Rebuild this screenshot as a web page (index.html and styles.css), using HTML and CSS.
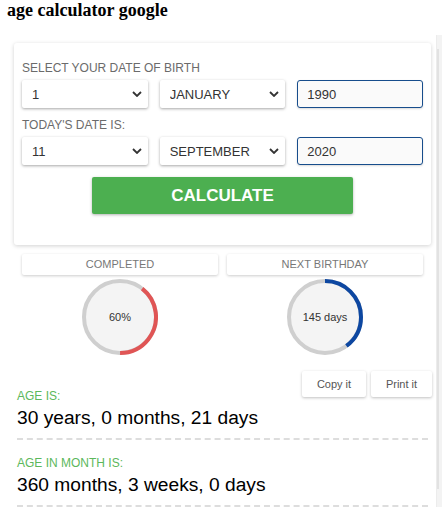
FILE: index.html
```html
<!DOCTYPE html>
<html lang="en">
    <head>
        <meta charset="UTF-8">
        <meta name="viewport" content="width=device-width, initial-scale=1.0">
        <title>age calculator google</title>
        <link rel="stylesheet" href="styles.css">
    </head>
    <body>
        <h1 class="title">age calculator google</h1>
        <div class="page">
            <div class="main">
                <div class="card">
                    <div class="label">Select your date of birth</div>
                    <div class="date-row">
                        <div class="select-wrap">
                            <select class="pick"><option>1</option></select>
                            <svg class="chev" width="10" height="6" viewBox="0 0 10 6"><path d="M1 1l4 4 4-4" fill="none" stroke="#333" stroke-width="1.8"/></svg>
                        </div>
                        <div class="select-wrap">
                            <select class="pick"><option>JANUARY</option></select>
                            <svg class="chev" width="10" height="6" viewBox="0 0 10 6"><path d="M1 1l4 4 4-4" fill="none" stroke="#333" stroke-width="1.8"/></svg>
                        </div>
                        <input class="year" type="text" value="1990">
                    </div>
                    <div class="label second">Today's date is:</div>
                    <div class="date-row">
                        <div class="select-wrap">
                            <select class="pick"><option>11</option></select>
                            <svg class="chev" width="10" height="6" viewBox="0 0 10 6"><path d="M1 1l4 4 4-4" fill="none" stroke="#333" stroke-width="1.8"/></svg>
                        </div>
                        <div class="select-wrap">
                            <select class="pick"><option>SEPTEMBER</option></select>
                            <svg class="chev" width="10" height="6" viewBox="0 0 10 6"><path d="M1 1l4 4 4-4" fill="none" stroke="#333" stroke-width="1.8"/></svg>
                        </div>
                        <input class="year" type="text" value="2020">
                    </div>
                    <button class="calc">CALCULATE</button>
                </div>

                <div class="stats">
                    <div class="tab">Completed</div>
                    <div class="tab">Next birthday</div>
                    <div class="ring">
                        <svg width="76" height="76" viewBox="0 0 76 76">
                            <circle cx="38" cy="38" r="36" fill="#f4f4f4" stroke="#cfcfcf" stroke-width="4"/>
                            <circle cx="38" cy="38" r="36" fill="none" stroke="#e05555" stroke-width="4" stroke-dasharray="89 300" transform="rotate(-52 38 38)"/>
                        </svg>
                        <span class="ring-text">60%</span>
                    </div>
                    <div class="ring">
                        <svg width="76" height="76" viewBox="0 0 76 76">
                            <circle cx="38" cy="38" r="36" fill="#f4f4f4" stroke="#cfcfcf" stroke-width="4"/>
                            <circle cx="38" cy="38" r="36" fill="none" stroke="#0d47a1" stroke-width="4" stroke-dasharray="90 300" transform="rotate(-90 38 38)"/>
                        </svg>
                        <span class="ring-text">145 days</span>
                    </div>
                </div>

                <div class="results">
                    <div class="actions">
                        <button class="small copy">Copy it</button>
                        <button class="small print">Print it</button>
                    </div>
                    <div class="result first">
                        <div class="res-label">Age is:</div>
                        <div class="res-value">30 years, 0 months, 21 days</div>
                    </div>
                    <div class="result">
                        <div class="res-label">Age in month is:</div>
                        <div class="res-value">360 months, 3 weeks, 0 days</div>
                    </div>
                </div>
            </div>
            <div class="rail"><div class="thumb"></div></div>
        </div>
    </body>
</html>
```

FILE: styles.css
```css
body {
    margin: 0;
    font-family: "Liberation Sans", Arial, sans-serif;
    background: #fff;
    color: #333;
}

.title {
    margin: 0;
    padding: 0 7px;
    font-family: "Liberation Serif", "Times New Roman", serif;
    font-size: 18px;
    font-weight: bold;
    line-height: 20px;
    color: #000;
}

.page {
    display: flex;
    margin-top: 15px;
}

.main {
    width: 436px;
    padding-top: 8px;
}

.rail {
    width: 5px;
    background-color: #f3f3f3;
    border-left: 1px solid #ececec;
    padding-top: 14px;
}

.thumb {
    width: 2px;
    height: 440px;
    background-color: #e2e2e2;
}

.card {
    margin-left: 14px;
    width: 417px;
    box-sizing: border-box;
    padding: 17px 8px 31px;
    background-color: #fff;
    border-radius: 3px;
    box-shadow: 0 1px 4px rgba(0, 0, 0, 0.18);
}

.label {
    font-size: 12px;
    line-height: 16px;
    color: #6b6b6b;
    text-transform: uppercase;
    margin-bottom: 4px;
}

.label.second {
    margin-top: 9px;
}

.date-row {
    display: grid;
    grid-template-columns: 1fr 1fr 1fr;
    gap: 12px;
}

.select-wrap {
    position: relative;
}

.pick {
    appearance: none;
    -webkit-appearance: none;
    width: 100%;
    height: 28px;
    padding: 0 10px;
    border: none;
    border-radius: 2px;
    background-color: #fff;
    box-shadow: 0 1px 3px rgba(0, 0, 0, 0.35);
    font-family: "Liberation Sans", Arial, sans-serif;
    font-size: 13px;
    color: #333;
}

.chev {
    position: absolute;
    right: 6px;
    top: 11px;
    pointer-events: none;
}

.year {
    width: 100%;
    height: 28px;
    box-sizing: border-box;
    padding: 0 9px;
    border: 1px solid #174d8c;
    border-radius: 3px;
    background-color: #fafafa;
    box-shadow: 0 1px 2px rgba(0, 0, 0, 0.15);
    font-family: "Liberation Sans", Arial, sans-serif;
    font-size: 13px;
    color: #333;
}

.calc {
    display: block;
    margin: 12px auto 0;
    width: 261px;
    height: 37px;
    border: none;
    border-radius: 2px;
    background-color: #4caf50;
    box-shadow: 0 1px 3px rgba(0, 0, 0, 0.3);
    color: #fff;
    font-family: "Liberation Sans", Arial, sans-serif;
    font-size: 17px;
    font-weight: bold;
}

.stats {
    display: grid;
    grid-template-columns: 1fr 1fr;
    column-gap: 9px;
    row-gap: 4px;
    margin: 9px 13px 0 22px;
}

.tab {
    height: 21px;
    line-height: 21px;
    text-align: center;
    font-size: 11px;
    color: #777;
    text-transform: uppercase;
    background-color: #fff;
    border-radius: 2px;
    box-shadow: 0 1px 3px rgba(0, 0, 0, 0.2);
}

.ring {
    position: relative;
    width: 76px;
    height: 76px;
    margin: 0 auto;
}

.ring svg {
    display: block;
}

.ring-text {
    position: absolute;
    left: 0;
    right: 0;
    top: 30px;
    text-align: center;
    font-size: 11px;
    line-height: 16px;
    color: #333;
}

.results {
    margin: 16px 4px 0 17px;
}

.actions {
    float: right;
    display: flex;
    gap: 5px;
}

.small {
    height: 26px;
    border: none;
    border-radius: 2px;
    background-color: #fff;
    box-shadow: 0 1px 3px rgba(0, 0, 0, 0.25);
    font-family: "Liberation Sans", Arial, sans-serif;
    font-size: 11px;
    color: #555;
}

.copy {
    width: 64px;
}

.print {
    width: 61px;
}

.result {
    margin-right: 4px;
    padding-bottom: 9px;
    border-bottom: 2px dashed #ddd;
    margin-top: 15px;
}

.result.first {
    padding-top: 17px;
    margin-top: 0;
}

.res-label {
    font-size: 12px;
    line-height: 16px;
    color: #5cb85c;
    text-transform: uppercase;
    margin-bottom: 2px;
}

.res-value {
    font-size: 19.2px;
    line-height: 23px;
    color: #000;
}
```
